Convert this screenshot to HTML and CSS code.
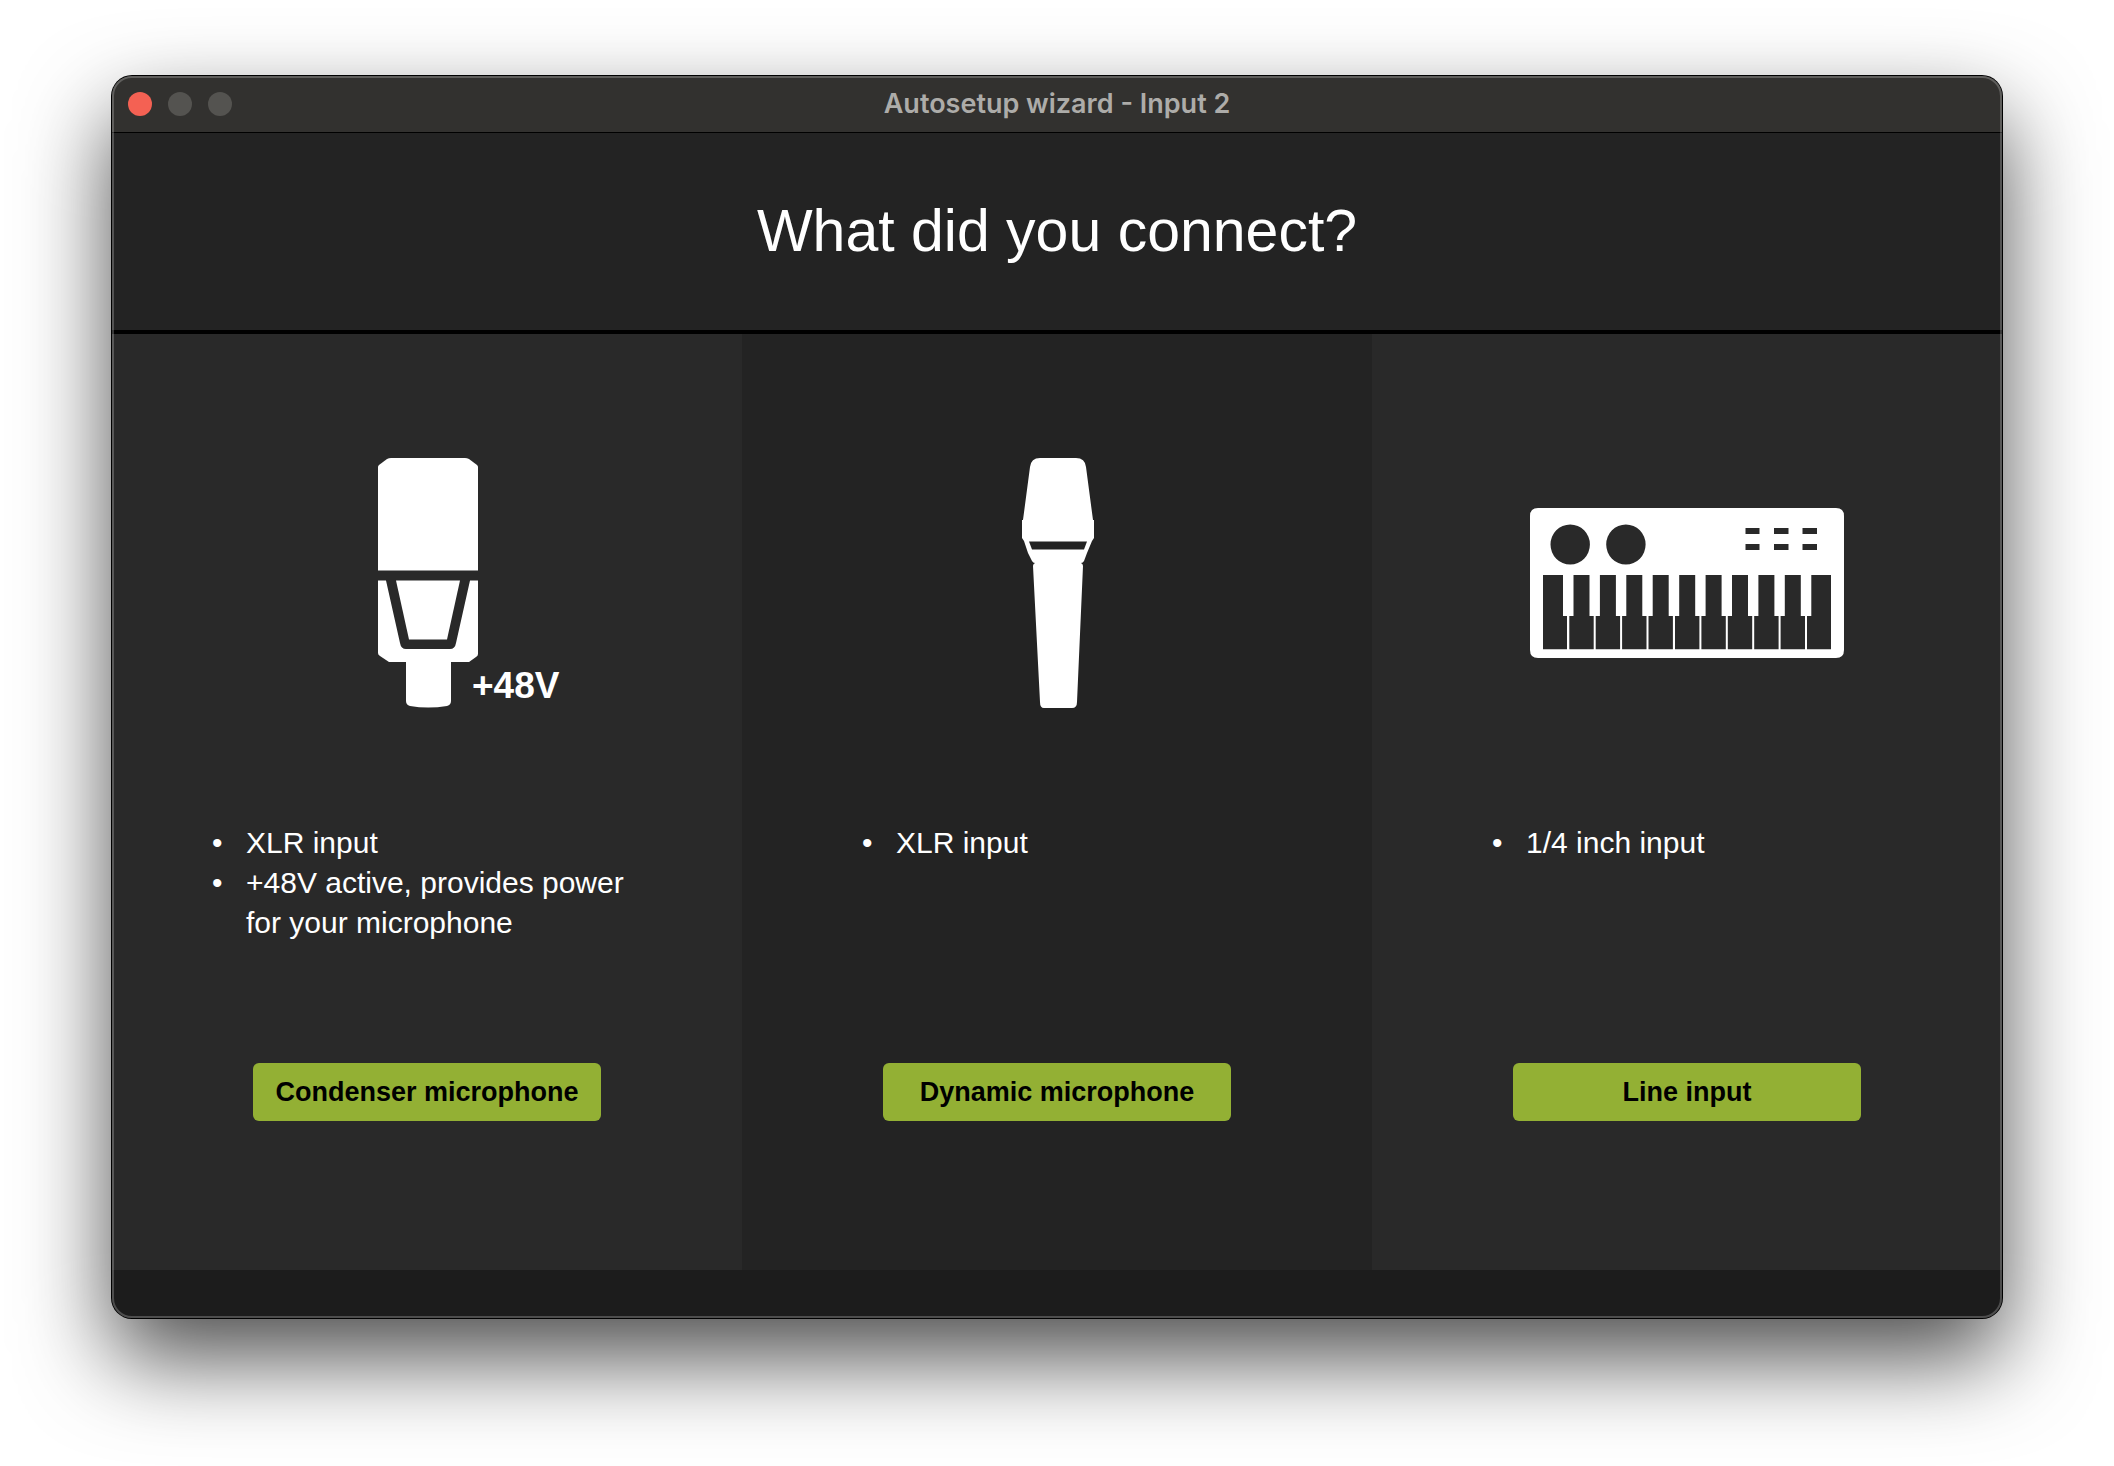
FILE: index.html
```html
<!DOCTYPE html>
<html lang="en">
<head>
<meta charset="utf-8">
<title>Autosetup wizard - Input 2</title>
<link rel="stylesheet" href="styles.css">
</head>
<body>
<main class="window">
  <header class="titlebar">
    <div class="lights">
      <button class="light light-close" type="button" aria-label="Close"></button>
      <button class="light" type="button" aria-label="Minimize" disabled></button>
      <button class="light" type="button" aria-label="Zoom" disabled></button>
    </div>
    <div class="title">Autosetup wizard - Input 2</div>
  </header>
  <div class="question">
    <h1>What did you connect?</h1>
  </div>
  <div class="choices">
    <section class="choice">
      <div class="picture">
        <svg class="icon icon-condenser" viewBox="-2 0 102 250" aria-hidden="true">
          <path d="M0 112.500V9Q0 8 1 7L9 1Q11 0 13 0H87Q89 0 91 1L99 7Q100 8 100 9V112.500Z"/>
          <path d="M0 122.500H8L22 185Q23 191 28 191H72Q77 191 78 185L92 122.500H100V196Q100 198 98 199L91 204H73V243Q73 247 69 248Q50 251 32 248Q28 247 28 243V204H11L2 198Q0 197 0 195Z"/>
          <path d="M18 122.500H82L69 181.500H31Z"/>
        </svg>
        <span class="phantom">+48V</span>
      </div>
      <ul class="facts facts-wide">
        <li>XLR input</li>
        <li>+48V active, provides power for your microphone</li>
      </ul>
      <button class="pick" type="button">Condenser microphone</button>
    </section>
    <section class="choice choice-dark">
      <div class="picture">
        <svg class="icon icon-dynamic" viewBox="-2 0 74 250" aria-hidden="true">
          <path fill-rule="evenodd" d="M18 0H54Q63 0 64 9L71 62H72V80L70 83L65 95L62 103Q61 105 59 105Q61 106 61 108L55 244Q55 250 50 250H22Q18 250 18 244L11 108Q11 106 13 105Q11 105 10 103L6 95L2 83L0 80V62H1L8 9Q9 0 18 0ZM7 83.500L10 91.500H62L65 83.500Z"/>
        </svg>
      </div>
      <ul class="facts">
        <li>XLR input</li>
      </ul>
      <button class="pick" type="button">Dynamic microphone</button>
    </section>
    <section class="choice">
      <div class="picture">
        <svg class="icon icon-keys" viewBox="0 0 314 150" aria-hidden="true">
          <path fill-rule="evenodd" d="M8 0H306Q314 0 314 8V142Q314 150 306 150H8Q0 150 0 142V8Q0 0 8 0Z
            M20.500 36.500a19.700 20 0 1 0 39.400 0a19.700 20 0 1 0 -39.400 0Z
            M76.200 36.500a19.700 20 0 1 0 39.400 0a19.700 20 0 1 0 -39.400 0Z
            M215.500 20h14v6h-14ZM244 20h14.500v6h-14.500ZM272.500 20h14.500v6h-14.500Z
            M215.500 36h14v6h-14ZM244 36h14.500v6h-14.500ZM272.500 36h14.500v6h-14.500Z
            M13 67H33V108H37V141.300H13Z
            M43.500 67H59.500V108H63.700V141.300H39.300V108H43.500Z
            M69.900 67H85.900V108H90.100V141.300H65.700V108H69.900Z
            M96.300 67H112.300V108H116.500V141.300H92.100V108H96.300Z
            M122.700 67H138.700V108H142.900V141.300H118.500V108H122.700Z
            M149.200 67H165.200V108H169.400V141.300H145V108H149.200Z
            M175.600 67H191.600V108H195.800V141.300H171.400V108H175.600Z
            M202 67H218V108H222.200V141.300H197.800V108H202Z
            M228.400 67H244.400V108H248.600V141.300H224.200V108H228.400Z
            M254.800 67H270.800V108H275V141.300H250.600V108H254.800Z
            M281.300 67H301V141.300H277V108H281.300Z"/>
        </svg>
      </div>
      <ul class="facts">
        <li>1/4 inch input</li>
      </ul>
      <button class="pick" type="button">Line input</button>
    </section>
  </div>
  <footer class="statusbar"></footer>
</main>
</body>
</html>
```
FILE: styles.css
```css
* {
  box-sizing: border-box;
}

body {
  margin: 0;
  min-height: 100vh;
  padding: 76px 112px 148px;
  display: flex;
  background: #fff;
  color: #fff;
  font-family: "Liberation Sans", Arial, sans-serif;
}

.window {
  position: relative;
  flex: 1;
  display: flex;
  flex-direction: column;
  border-radius: 20px;
  background: #232323;
  box-shadow: 0 0 0 1px #000, 0 40px 90px rgba(0, 0, 0, 0.7);
}

/* light rim drawn over the window's content */
.window::after {
  content: "";
  position: absolute;
  inset: 0;
  border: 2px solid rgba(255, 255, 255, 0.22);
  border-radius: 20px;
  pointer-events: none;
}

.titlebar {
  height: 57px;
  padding: 0 16px;
  display: grid;
  grid-template-columns: 1fr auto 1fr;
  align-items: center;
  border-bottom: 1px solid #000;
  border-radius: 20px 20px 0 0;
  background: #32312f;
}

.lights {
  display: flex;
  gap: 16px;
}

.light {
  width: 24px;
  height: 24px;
  padding: 0;
  border: 0;
  border-radius: 50%;
  background: #545350;
}

.light-close {
  background: #f46153;
}

.title {
  color: #adaca9;
  font-family: Inter, sans-serif;
  font-size: 27px;
  font-weight: 600;
  line-height: 32px;
}

.question {
  padding: 64px 24px;
  border-bottom: 4px solid #000;
}

.question h1 {
  margin: 0;
  font-size: 59px;
  font-weight: 400;
  line-height: 69px;
  text-align: center;
}

.choices {
  flex: 1;
  display: grid;
  grid-template-columns: repeat(3, 1fr);
}

.choice {
  padding: 124px 24px 149px;
  display: flex;
  flex-direction: column;
  align-items: center;
  background: #292929;
}

.choice-dark {
  background: #232323;
}

.picture {
  position: relative;
  height: 250px;
  display: flex;
  align-items: center;
}

.icon {
  display: block;
  fill: #fff;
}

.icon-condenser {
  width: 102px;
  height: 250px;
}

.icon-dynamic {
  width: 74px;
  height: 250px;
}

.icon-keys {
  width: 314px;
  height: 150px;
}

.phantom {
  position: absolute;
  left: 96px;
  bottom: 0;
  font-size: 37px;
  font-weight: 700;
  line-height: 44px;
}

.facts {
  width: 390px;
  margin: 115px 0 auto;
  padding: 0 0 0 34px;
  list-style: none;
  font-size: 30px;
  line-height: 40px;
}

.facts-wide {
  width: 430px;
}

.facts li::before {
  content: "•";
  float: left;
  margin-left: -34px;
}

.pick {
  width: 348px;
  height: 58px;
  border: 0;
  border-radius: 6px;
  background: #93b034;
  color: #000;
  font-family: inherit;
  font-size: 27px;
  font-weight: 700;
}

.statusbar {
  height: 48px;
  border-radius: 0 0 20px 20px;
  background: #1c1c1c;
}
```
